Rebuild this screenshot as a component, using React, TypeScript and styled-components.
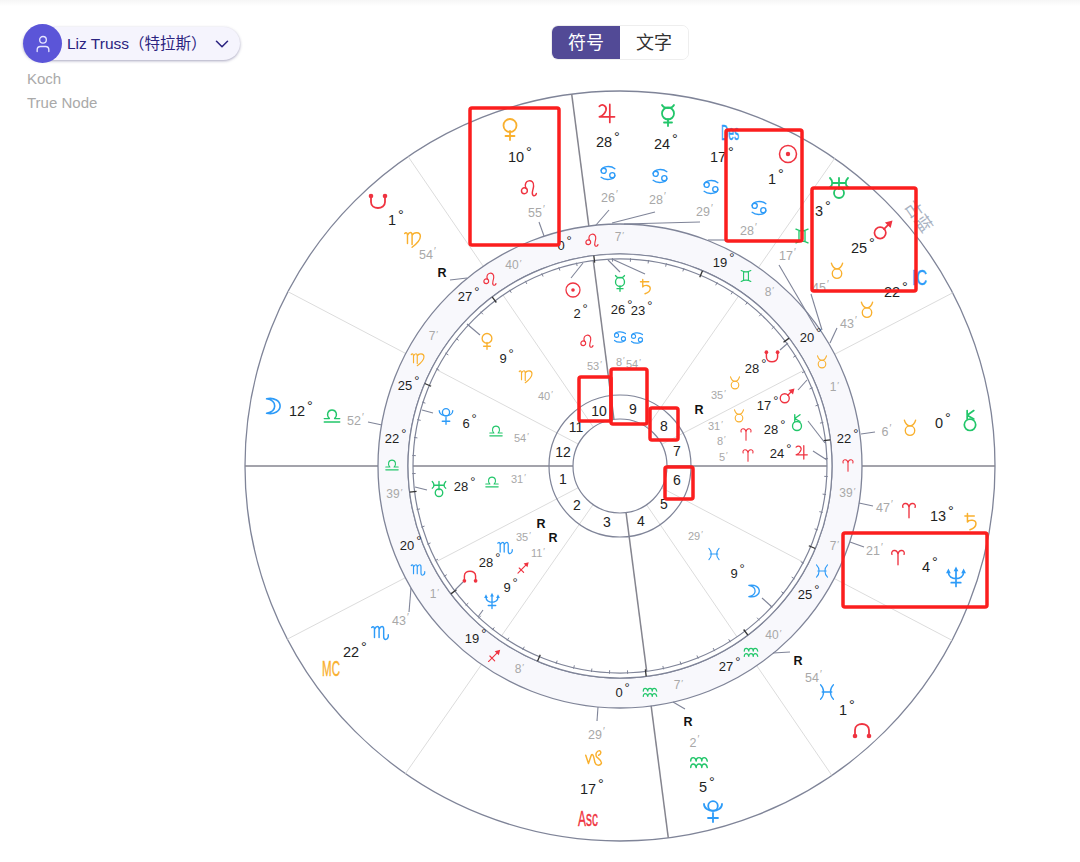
import React from "react";
import styled, { createGlobalStyle } from "styled-components";
import { ChevronDown, User } from "lucide-react";

const Global = createGlobalStyle`
  html, body { margin: 0; padding: 0; background: #fff; overflow: hidden; }
  body { font-family: "Liberation Sans", "Noto Sans CJK SC", sans-serif; }
`;

const Page = styled.div`
  width: 1080px;
  height: 862px;
  display: grid;
  background: linear-gradient(#f6f6f6, #fff 6px);
`;
const Header = styled.header`
  grid-area: 1 / 1;
  z-index: 1;
  display: flex;
  align-items: flex-start;
  padding: 24px 0 0 23px;
`;
const UserColumn = styled.div`
  width: 528px;
  display: flex;
  flex-direction: column;
  align-items: flex-start;
`;
const UserPill = styled.div`
  width: 217px;
  height: 33px;
  margin-top: 3px;
  margin-bottom: 7px;
  display: flex;
  align-items: center;
  border-radius: 17px;
  background: #f5f4fd;
  box-shadow: 0 1px 3px rgba(60, 56, 110, 0.45);
  color: #2b2380;
  font-size: 15.5px;
  white-space: nowrap;
`;
const Avatar = styled.div`
  flex: none;
  width: 39px;
  height: 39px;
  margin-right: 5px;
  border-radius: 50%;
  background: #5b55d8;
  color: #e6e5ff;
  display: flex;
  align-items: center;
  justify-content: center;
`;
const UserName = styled.span`
  padding-bottom: 4px;
`;
const Caret = styled(ChevronDown)`
  margin-left: 4px;
  flex: none;
`;
const Meta = styled.div`
  margin-left: 4px;
  color: #a9a9a9;
  font-size: 15px;
  line-height: 24px;
  margin-top: 0;
`;
const Toggle = styled.div`
  display: flex;
  height: 35px;
  margin-top: 1px;
  border-radius: 7px;
  border: 1px solid #eeeeee;
  overflow: hidden;
  box-sizing: border-box;
`;
const ToggleOption = styled.div<{ $active?: boolean }>`
  width: 68px;
  padding-bottom: 3px;
  box-sizing: border-box;
  display: flex;
  align-items: center;
  justify-content: center;
  font-family: "Noto Sans CJK SC", sans-serif;
  font-size: 18px;
  background: ${(p) => (p.$active ? "#524a96" : "#fff")};
  color: ${(p) => (p.$active ? "#fff" : "#333")};
`;
const Chart = styled.svg`
  grid-area: 1 / 1;
  display: block;
  width: 1080px;
  height: 862px;
`;
const DegreeText = styled.text<{ $size: number }>`
  font-family: "Liberation Sans", sans-serif;
  font-size: ${(p) => p.$size}px;
  fill: #1f1f1f;
`;
const MinuteText = styled.text<{ $size: number }>`
  font-family: "Liberation Sans", sans-serif;
  font-size: ${(p) => p.$size}px;
  fill: #a8a8a8;
`;
const RetroText = styled.text`
  font-family: "Liberation Sans", sans-serif;
  font-size: 12.5px;
  font-weight: 700;
  fill: #111;
`;
const HouseText = styled.text`
  font-family: "Liberation Sans", sans-serif;
  font-size: 14px;
  fill: #222;
`;
const AngleText = styled.text<{ $color: string }>`
  font-family: "Liberation Sans", sans-serif;
  font-size: 22px;
  fill: ${(p) => p.$color};
  stroke: ${(p) => p.$color};
  stroke-width: 0.4px;
`;
const Watermark = styled.text`
  font-family: "Noto Sans CJK SC", sans-serif;
  font-size: 17px;
  fill: #a8b2c2;
`;

const RED = "#ef3340";
const YEL = "#f9b02e";
const GRN = "#22c66a";
const BLU = "#2d9bf8";

type G = { d?: string; circles?: [number, number, number][]; dots?: [number, number, number][]; fill?: string; boost?: number };

const SIGN = 1.15;

const GLYPHS: Record<string, G> = {
  aries: { boost: SIGN, d: "M-7,-3 C-9,-8 -1,-10 0,-3 L0,9 M7,-3 C9,-8 1,-10 0,-3" },
  taurus: { boost: SIGN, d: "M-6.5,-9 C-5,-4 -2,-2.5 0,-2.5 C2,-2.5 5,-4 6.5,-9", circles: [[0, 3, 5.5]] },
  gemini: { boost: SIGN, d: "M-7,-8 Q0,-4 7,-8 M-7,8 Q0,4 7,8 M-3.5,-6 L-3.5,6 M3.5,-6 L3.5,6" },
  cancer: {
    boost: SIGN,
    d: "M-8,-3 C-7,-8 3,-9 8,-5 M8,3 C7,8 -3,9 -8,5",
    circles: [[-5, -2.5, 3], [5, 2.5, 3]],
  },
  leo: {
    boost: SIGN,
    d: "M-3.5,0 C-7,-9 6,-11 5,-2 C4.5,3 2,6 4.5,8 C6,9 7.5,8 8,6",
    circles: [[-5, 3, 3.2]],
  },
  virgo: {
    boost: SIGN,
    d: "M-9,-6 C-7,-8 -6,-6 -6,-4 L-6,5 M-6,-4 C-4,-8 -1,-8 -1,-4 L-1,6 M-1,-4 C1,-8 8,-8 8,-3 C8,2 3,6 -1,9",
  },
  libra: { boost: SIGN, d: "M-9,7 L9,7 M-9,3 L-3,3 C-7,-1 -5,-7 0,-7 C5,-7 7,-1 3,3 L9,3" },
  scorpio: {
    boost: SIGN,
    d: "M-9,-6 C-7,-8 -6,-6 -6,-4 L-6,5 M-6,-4 C-4,-8 -1,-8 -1,-4 L-1,5 M-1,-4 C1,-8 4,-8 4,-4 L4,4 C4,8 8,8 9,4 L9,2",
  },
  sagittarius: { boost: SIGN, d: "M-8,8 L6,-6 M-6,0 L1,7", fill: "M9,-9 L1,-7 L7,-1 Z" },
  capricorn: { boost: SIGN, d: "M-9,-3 L-6,6 L-3,-3 C-1,-6 0,0 1,5 C2,8 6,9 8,6 C9,3 5,1 3,-1 C1,-4 3,-8 6,-8 C8,-7 8,-4 5,-3" },
  aquarius: {
    boost: SIGN,
    d: "M-9,-1 C-9,-6 -4,-6 -3,-1 C-3,-6 3,-6 3,-1 C3,-6 8,-6 9,-1 M-9,6 C-9,1 -4,1 -3,6 C-3,1 3,1 3,6 C3,1 8,1 9,6",
  },
  pisces: { boost: SIGN, d: "M-8,-9 C-3,-4 -3,4 -8,9 M8,-9 C3,-4 3,4 8,9 M-6,0 L6,0" },
  sun: { circles: [[0, 0, 10]], dots: [[0, 0, 2.6]] },
  moon: { d: "M-6,-8 C3,-10 9,-5 9,0 C9,5 3,10 -6,8 C0,7 3,4 3,0 C3,-4 0,-7 -6,-8 Z" },
  mercury: {
    d: "M-6,-10 C-4,-6 4,-6 6,-10 M0,4 L0,11 M-4,7.5 L4,7.5",
    circles: [[0, -1.5, 6]],
  },
  venus: { d: "M0,2 L0,11 M-4.5,7 L4.5,7", circles: [[0, -3.5, 6.5]] },
  mars: { d: "M1,-1 L7,-7", circles: [[-3, 3, 6]], fill: "M10,-10 L2,-8 L8,-2 Z" },
  jupiter: { d: "M-7,-7 C-4,-10 1,-8 0,-3 C-1,0 -4,3 -7,4 L9,4 M4,-9 L4,10" },
  saturn: { d: "M-6,-7 L5,-7 M-3,-10 L-3,0 C-1,-3 7,-3 7,2 C7,6 3,8 0,9" },
  uranus: {
    d: "M-9,-10 C-6,-7 -6,-3 -9,-1 M9,-10 C6,-7 6,-3 9,-1 M-7,-5 L7,-5 M0,-10 L0,1",
    circles: [[0, 5, 5]],
  },
  neptune: {
    d: "M-8,-5 C-8,4 8,4 8,-5 M0,-7 L0,10 M-5,6 L5,6",
    fill: "M0,-11 L-2.5,-6 L2.5,-6 Z M-8,-9 L-10.5,-4 L-5.5,-4 Z M8,-9 L5.5,-4 L10.5,-4 Z",
  },
  pluto: {
    d: "M-9,-7 C-9,2 9,2 9,-7 M0,2 L0,11 M-5,7 L5,7",
    circles: [[0, -5, 4.8]],
  },
  chiron: { d: "M-3,-2 L-3,-11 M-3,-6 L4,-11 M-3,-6 L4,-2", circles: [[0, 4, 6]] },
  nNode: {
    d: "M-7,6 L-7,0 C-7,-8 7,-8 7,0 L7,6",
    dots: [[-7, 6, 2.3], [7, 6, 2.3]],
  },
  sNode: {
    d: "M-7,-6 L-7,0 C-7,8 7,8 7,0 L7,-6",
    dots: [[-7, -6, 2.3], [7, -6, 2.3]],
  },
};

const Glyph = ({ name, x, y, size, color }: { name: string; x: number; y: number; size: number; color: string }) => {
  const g = GLYPHS[name];
  const k = (size * (g.boost ?? 1)) / 20;
  const sw = Math.max(1.1, Math.min(2, size * 0.09)) / k;
  return (
    <g transform={`translate(${x} ${y}) scale(${k})`} fill="none" stroke={color} strokeWidth={sw} strokeLinecap="round" strokeLinejoin="round">
      {g.d && <path d={g.d} />}
      {g.circles?.map(([cx, cy, r], i) => <circle key={i} cx={cx} cy={cy} r={r} />)}
      {g.dots?.map(([cx, cy, r], i) => <circle key={i} cx={cx} cy={cy} r={r} fill={color} stroke="none" />)}
      {g.fill && <path d={g.fill} fill={color} stroke="none" />}
    </g>
  );
};

const Degree = ({ x, y, v, size = 14.5 }: { x: number; y: number; v: number; size?: number }) => {
  const s = String(v);
  const start = x - (s.length * size * 0.556) / 2;
  return (
    <DegreeText $size={size} x={start} y={y + size * 0.36}>
      {s}
      <tspan dx="2" dy={-size * 0.38}>°</tspan>
    </DegreeText>
  );
};

const Minute = ({ x, y, v, size = 12.5 }: { x: number; y: number; v: number; size?: number }) => {
  const s = String(v);
  const start = x - (s.length * size * 0.556) / 2;
  return (
    <MinuteText $size={size} x={start} y={y + size * 0.36}>
      {s}
      <tspan dx="1" dy={-size * 0.3} fontSize={size * 0.8}>′</tspan>
    </MinuteText>
  );
};

const glyphs: [string, number, number, number, string][] = [
  // outer wheel
  ["venus", 510, 129, 20, YEL], ["leo", 529, 188, 16, RED], ["jupiter", 606, 113, 19, RED],
  ["cancer", 608, 173, 15, BLU], ["mercury", 668, 115, 20, GRN], ["cancer", 660, 176, 15, BLU],
  ["cancer", 711, 187, 15, BLU], ["sun", 788, 154, 17, RED], ["cancer", 759, 208, 15, BLU],
  ["uranus", 839, 188, 20, GRN], ["gemini", 802, 236, 15, GRN], ["mars", 883, 230, 19, RED],
  ["taurus", 837, 271, 15, YEL], ["taurus", 867, 310, 15, YEL], ["taurus", 910, 428, 15, YEL],
  ["chiron", 970, 421, 19, GRN], ["aries", 909, 510, 15, RED], ["saturn", 970, 522, 17, YEL],
  ["aries", 898, 557, 15, RED], ["neptune", 956, 577, 19, BLU], ["moon", 272, 406, 18, BLU],
  ["libra", 332, 416, 15, GRN], ["virgo", 413, 239, 16, YEL], ["sNode", 378, 202, 20, RED],
  ["scorpio", 380, 633, 16, BLU], ["capricorn", 594, 758, 16, YEL], ["aquarius", 699, 762, 16, GRN],
  ["pluto", 713, 811, 20, BLU], ["pisces", 827, 692, 14, BLU], ["nNode", 862, 730, 20, RED],
  // zodiac band
  ["leo", 592, 240, 13, RED], ["gemini", 746, 276, 12, GRN], ["taurus", 822, 362, 12, YEL],
  ["aries", 848, 465, 12, RED], ["pisces", 822, 571, 12, BLU], ["aquarius", 751, 652, 13, GRN],
  ["aquarius", 650, 692, 13, GRN], ["sagittarius", 494, 656, 12, RED], ["scorpio", 418, 570, 13, BLU],
  ["libra", 392, 465, 12, GRN], ["virgo", 418, 359, 13, YEL], ["leo", 490, 279, 13, RED],
  // inner wheel
  ["sun", 573, 290, 14, RED], ["leo", 587, 341, 13, RED], ["mercury", 620, 283, 15, GRN],
  ["saturn", 645, 287, 15, YEL], ["cancer", 620, 337, 12, BLU], ["cancer", 637, 338, 12, BLU],
  ["sNode", 772, 357, 16, RED], ["taurus", 735, 383, 12, YEL], ["mars", 787, 396, 15, RED],
  ["taurus", 739, 416, 12, YEL], ["aries", 746, 434, 12, RED], ["chiron", 797, 423, 15, GRN],
  ["aries", 748, 455, 12, RED], ["jupiter", 801, 452, 14, RED], ["pisces", 714, 554, 11, BLU],
  ["moon", 753, 591, 14, BLU], ["virgo", 526, 376, 13, YEL], ["venus", 487, 341, 15, YEL],
  ["pluto", 446, 416, 15, BLU], ["libra", 496, 431, 12, GRN], ["uranus", 439, 489, 15, GRN],
  ["libra", 492, 482, 12, GRN], ["scorpio", 505, 548, 14, BLU], ["nNode", 470, 576, 16, RED],
  ["sagittarius", 523, 568, 11, RED], ["neptune", 492, 601, 15, BLU],
];

const degrees: [number, number, number, number?][] = [
  [516, 157, 10], [604, 142, 28], [662, 144, 24], [718, 157, 17], [772, 179, 1], [819, 211, 3],
  [859, 248, 25], [892, 292, 22], [939, 423, 0], [938, 516, 13], [926, 567, 4], [297, 411, 12],
  [392, 220, 1], [351, 652, 22], [588, 789, 17], [703, 787, 5], [843, 710, 1],
  // band
  [561, 245, 0, 13], [720, 262, 19, 13], [807, 337, 20, 13], [844, 438, 22, 13], [805, 594, 25, 13],
  [726, 666, 27, 13], [619, 692, 0, 13], [472, 638, 19, 13], [407, 545, 20, 13], [392, 438, 22, 13],
  [405, 385, 25, 13], [465, 296, 27, 13],
  // inner
  [577, 313, 2, 13], [618, 309, 26, 13], [638, 310, 23, 13], [752, 368, 28, 13], [764, 405, 17, 13],
  [771, 429, 28, 13], [777, 453, 24, 13], [734, 573, 9, 13], [503, 358, 9, 13], [466, 423, 6, 13],
  [461, 486, 28, 13], [486, 562, 28, 13], [507, 587, 9, 13],
];

const minutes: [number, number, number, number?][] = [
  [535, 212, 55], [608, 197, 26], [656, 199, 28], [703, 211, 29], [747, 230, 28], [786, 255, 17],
  [819, 287, 45], [847, 323, 43], [885, 431, 6], [883, 507, 47], [873, 550, 21], [354, 420, 52],
  [426, 254, 54], [399, 620, 43], [595, 734, 29], [693, 742, 2], [812, 677, 54],
  // band
  [618, 237, 7, 12], [768, 292, 8, 12], [833, 387, 1, 12], [846, 493, 39, 12], [833, 546, 7, 12],
  [772, 635, 40, 12], [677, 685, 7, 12], [518, 669, 8, 12], [433, 594, 1, 12], [393, 494, 39, 12],
  [432, 336, 7, 12], [512, 265, 40, 12],
  // inner
  [593, 366, 53, 11], [619, 362, 8, 11], [632, 364, 54, 11], [717, 395, 35, 11], [714, 426, 31, 11],
  [720, 441, 8, 11], [722, 457, 5, 11], [694, 536, 29, 11], [544, 396, 40, 11], [520, 438, 54, 11],
  [517, 479, 31, 11], [522, 537, 35, 11], [537, 553, 11, 11],
];

const retros: [number, number][] = [[442, 272], [699, 409], [541, 523], [553, 537], [798, 660], [688, 721]];

const houses: [number, number, number][] = [
  [563, 479, 1], [577, 505, 2], [607, 522, 3], [641, 521, 4], [664, 504, 5], [677, 480, 6],
  [677, 451, 7], [664, 426, 8], [633, 409, 9], [599, 411, 10], [576, 427, 11], [563, 452, 12],
];

const leaders: [number, number, number, number][] = [
  [539, 222, 544, 236], [609, 210, 596, 225], [655, 212, 612, 223], [700, 222, 624, 224], [725, 240, 708, 240],
  [779, 265, 817, 330], [811, 294, 822, 330], [837, 328, 830, 343], [861, 434, 875, 432], [859, 503, 873, 506],
  [850, 542, 864, 547], [368, 422, 382, 425], [450, 280, 467, 278], [411, 588, 409, 612], [598, 707, 597, 721],
  [673, 702, 685, 709], [790, 652, 773, 653], [571, 278, 583, 263], [620, 272, 608, 260], [645, 274, 612, 259],
  [780, 350, 788, 343], [798, 390, 807, 380], [808, 421, 825, 443], [813, 451, 827, 460], [480, 335, 467, 324],
  [433, 413, 422, 410], [415, 487, 427, 490], [463, 582, 455, 590], [483, 610, 478, 617], [762, 598, 772, 607],
];

const marks: [number, number, number, number][] = [
  [470, 108, 89, 137], [726, 130, 76, 111], [812, 188, 104, 103], [843, 533, 144, 74],
  [579, 377, 32, 44], [611, 369, 36, 55], [650, 408, 28, 32], [665, 467, 28, 32],
];

const angles: [string, string, number, number, number][] = [
  ["Des", BLU, 721, 140, 0.46],
  ["IC", BLU, 912, 285, 0.68],
  ["MC", YEL, 322, 676, 0.526],
  ["Asc", RED, 578, 826, 0.545],
];

const CX = 620;
const CY = 466;
const pt = (deg: number, r: number): [number, number] => {
  const a = (deg * Math.PI) / 180;
  return [CX + Math.cos(a) * r, CY - Math.sin(a) * r];
};

const Spoke = ({ deg, color, width }: { deg: number; color: string; width: number }) => {
  const [x1, y1] = pt(deg, 47);
  const [x2, y2] = pt(deg + 180, 375);
  const [x3, y3] = pt(deg + 180, 47);
  const [x4, y4] = pt(deg, 375);
  return (
    <>
      <line x1={x1} y1={y1} x2={x4} y2={y4} stroke={color} strokeWidth={width} />
      <line x1={x3} y1={y3} x2={x2} y2={y2} stroke={color} strokeWidth={width} />
    </>
  );
};

const ticks = Array.from({ length: 72 }, (_, i) => 7.1 + i * 5);
const RING = "#7f8498";

const annulus = (outer: number, inner: number) =>
  `M${CX - outer},${CY} A${outer},${outer} 0 1 1 ${CX + outer},${CY} A${outer},${outer} 0 1 1 ${CX - outer},${CY} Z ` +
  `M${CX - inner},${CY} A${inner},${inner} 0 1 0 ${CX + inner},${CY} A${inner},${inner} 0 1 0 ${CX - inner},${CY} Z`;

export default function App() {
  return (
    <Page>
      <Global />
      <Chart viewBox="0 0 1080 862">
        <circle cx={CX} cy={CY} r={375} fill="none" stroke={RING} strokeWidth={1.3} />
        {[55.1, 124.4, 27.5, 152.3].map((d) => (
          <Spoke key={d} deg={d} color="#dcdcdc" width={1} />
        ))}
        <Spoke deg={0} color="#85858f" width={1.5} />
        <Spoke deg={97.4} color="#85858f" width={1.5} />
        <path d={annulus(242, 212)} fill="#f8f8fc" fillRule="evenodd" stroke={RING} strokeWidth={1.3} />
        <path d={annulus(212, 207)} fill="#fff" fillRule="evenodd" stroke={RING} strokeWidth={1.2} />
        {ticks.map((d, i) => {
          const major = i % 6 === 0;
          const [x1, y1] = pt(d, major ? 205 : 204.5);
          const [x2, y2] = pt(d, major ? 212 : 208);
          return <line key={d} x1={x1} y1={y1} x2={x2} y2={y2} stroke={major ? "#333" : RING} strokeWidth={major ? 1.3 : 1} />;
        })}
        <circle cx={CX} cy={CY} r={71} fill="none" stroke={RING} strokeWidth={1.2} />
        <circle cx={CX} cy={CY} r={47} fill="none" stroke={RING} strokeWidth={1.2} />

        {leaders.map(([x1, y1, x2, y2]) => (
          <line key={`${x1}-${y1}`} x1={x1} y1={y1} x2={x2} y2={y2} stroke={RING} strokeWidth={1.1} />
        ))}
        {glyphs.map(([n, x, y, s, c]) => (
          <Glyph key={`${n}-${x}-${y}`} name={n} x={x} y={y} size={s} color={c} />
        ))}
        {degrees.map(([x, y, v, s]) => (
          <Degree key={`${x}-${y}`} x={x} y={y} v={v} size={s} />
        ))}
        {minutes.map(([x, y, v, s]) => (
          <Minute key={`${x}-${y}`} x={x} y={y} v={v} size={s} />
        ))}
        {retros.map(([x, y]) => (
          <RetroText key={`${x}-${y}`} x={x} y={y + 4.5} textAnchor="middle">R</RetroText>
        ))}
        {houses.map(([x, y, v]) => (
          <HouseText key={v} x={x} y={y + 5} textAnchor="middle">{v}</HouseText>
        ))}
        {angles.map(([label, color, x, y, sx]) => (
          <AngleText key={label} $color={color} transform={`translate(${x} ${y}) scale(${sx} 1)`}>{label}</AngleText>
        ))}
        <Watermark transform="translate(904 206) rotate(55)">古蓝</Watermark>
        {marks.map(([x, y, w, h]) => (
          <rect key={`${x}-${y}`} x={x} y={y} width={w} height={h} rx={2} fill="none" stroke="#fb1e1e" strokeWidth={3.5} />
        ))}
      </Chart>
      <Header>
        <UserColumn>
          <UserPill>
            <Avatar>
              <User size={20} strokeWidth={1.6} />
            </Avatar>
            <UserName>Liz Truss（特拉斯）</UserName>
            <Caret size={22} strokeWidth={1.7} />
          </UserPill>
          <Meta>Koch</Meta>
          <Meta>True Node</Meta>
        </UserColumn>
        <Toggle>
          <ToggleOption $active>符号</ToggleOption>
          <ToggleOption>文字</ToggleOption>
        </Toggle>
      </Header>
    </Page>
  );
}
